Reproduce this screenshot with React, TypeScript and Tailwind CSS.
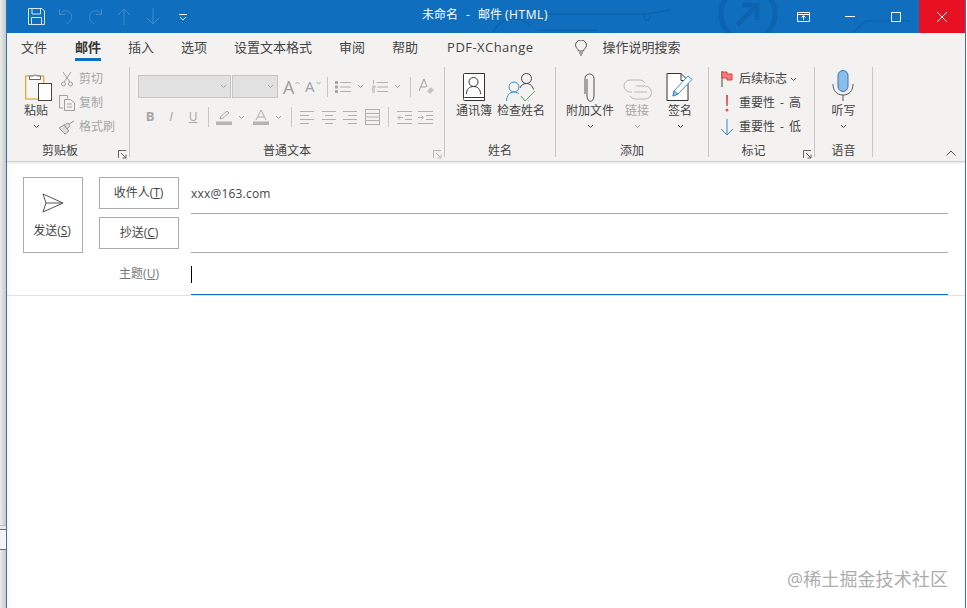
import type { ReactNode } from "react";

const cjk = "font-['Open_Sans','Noto_Sans_CJK_SC',sans-serif]";

const Caret = ({ className = "" }: { className?: string }) => (
  <svg width="7" height="5" viewBox="0 0 7 5" className={`shrink-0 ${className}`}>
    <path d="M1 1l2.5 2.5L6 1" fill="none" stroke="currentColor" strokeWidth="1" />
  </svg>
);

const Launcher = ({ className = "" }: { className?: string }) => (
  <svg width="9" height="9" viewBox="0 0 9 9" className={className}>
    <path d="M.5 8V.5H8M3 3l5 5M8 4.500V8H4.500" fill="none" stroke="currentColor" strokeWidth="1" />
  </svg>
);

const Divider = () => <div className="w-px h-[90px] bg-[#c6c6c6] shrink-0 mt-1" />;
const Sep = ({ className = "" }: { className?: string }) => <div className={`w-px h-[20px] bg-[#c8c8c8] shrink-0 ${className}`} />;

const GroupLabel = ({ children }: { children: ReactNode }) => (
  <div className="absolute bottom-[2px] left-0 right-0 text-center text-xs leading-4 text-[#444]">{children}</div>
);

const Lines = ({ kind }: { kind: "l" | "c" | "r" | "j" | "dec" | "inc" }) => {
  const d = {
    l: "M0 2.500h14M0 6.500h9M0 10.500h14M0 14.500h9",
    c: "M0 2.500h14M3 6.500h8M0 10.500h14M3 14.500h8",
    r: "M0 2.500h14M5 6.500h9M0 10.500h14M5 14.500h9",
    j: "M0 .5h15M0 15.500h15M1 4.500h13M1 8h13M1 11.500h13M.5 1v14M14.500 1v14",
    dec: "M0 2.500h15M8 6.500h7M8 10.500h7M0 14.500h15M6 8.500H1M3 6.500l-2 2 2 2",
    inc: "M0 2.500h15M8 6.500h7M8 10.500h7M0 14.500h15M0 8.500h5M3.500 6.500l2 2-2 2",
  }[kind];
  return (
    <svg width="16" height="16" viewBox="0 0 16 16" className="shrink-0">
      <path d={d} fill="none" stroke="#b0b0b0" strokeWidth="1" />
    </svg>
  );
};

const Paste = () => (
  <svg width="27" height="30" viewBox="0 0 27 30" className="ml-[5px] shrink-0">
    <rect x=".7" y="4" width="18" height="23" fill="#f6f6f6" stroke="#eaa63f" strokeWidth="1.300" />
    <path d="M4.500 7.500V4h4a2 2 0 0 1 3.500 0h3.500v3.500z" fill="#fff" stroke="#666" strokeWidth="1" />
    <rect x="13.500" y="11.500" width="13" height="17" fill="#fff" stroke="#444" strokeWidth="1" />
  </svg>
);

const Book = () => (
  <svg width="22" height="29" viewBox="0 0 22 29">
    <path d="M.5 25V1.500a1 1 0 0 1 1-1h20v27h-20a1.500 1.500 0 0 1-1-2.500a1.500 1.500 0 0 1 1-.5h20" fill="#fff" stroke="#333" strokeWidth="1" />
    <circle cx="10.500" cy="9" r="4.500" fill="none" stroke="#333" />
    <path d="M3.500 21c0-5 3-7.500 7-7.500s7 2.500 7 7.500" fill="none" stroke="#333" />
  </svg>
);

const CheckNames = () => (
  <svg width="31" height="29" viewBox="0 0 31 29">
    <circle cx="20.500" cy="5.500" r="5" fill="none" stroke="#444" />
    <path d="M14 15c1-3 3.500-4.500 6.500-4.500s6 2 7 6" fill="none" stroke="#444" />
    <circle cx="8" cy="14" r="5" fill="none" stroke="#3d8fce" />
    <path d="M.5 28c0-5 3-9 7.500-9 2.500 0 4 1 5 2" fill="none" stroke="#3d8fce" />
    <path d="M15 23l4 5 10-10" fill="none" stroke="#58a55c" />
  </svg>
);

const Clip = () => (
  <svg width="12" height="29" viewBox="0 0 12 29">
    <path d="M3 6v17c0 7 7 7 7 0V5.500C10 -.5 1 -.5 1 5.500V21" fill="none" stroke="#555" strokeWidth="1" />
  </svg>
);

const LinkIcon = () => (
  <svg width="29" height="24" viewBox="0 0 29 24">
    <path d="M9 14H7a6 6 0 0 1 0-12h10a6 6 0 0 1 5 3" fill="none" stroke="#b8b8b8" />
    <path d="M13 8h9a6.500 6.500 0 0 1 0 13H12a6 6 0 0 1-5-3" fill="none" stroke="#b8b8b8" />
    <path d="M11 14h13" stroke="#b8b8b8" />
  </svg>
);

const Signature = () => (
  <svg width="28" height="29" viewBox="0 0 28 29">
    <path d="M1 .5h14l7 7v20H1z" fill="#fff" stroke="#333" />
    <path d="M15 .5v7h7" fill="none" stroke="#333" />
    <path d="M8 18L22 3l4 3.500L12 21l-5 2z" fill="#fff" stroke="#3d8fce" />
    <path d="M7 23l1-5 4 3z" fill="#8fc1e8" stroke="#3d8fce" />
  </svg>
);

const Mic = () => (
  <svg width="22" height="32" viewBox="0 0 22 32">
    <rect x="6" y=".5" width="10" height="21" rx="5" fill="#8cbde8" stroke="#2d78bd" />
    <path d="M1 14c0 7 4 11 10 11s10-4 10-11" fill="none" stroke="#555" />
    <path d="M11 25v6" stroke="#555" />
  </svg>
);

const TextButton = ({ icon, text, disabled, caret }: { icon: ReactNode; text: ReactNode; disabled?: boolean; caret?: boolean }) => (
  <div className={`h-6 flex items-center text-xs ${disabled ? "text-[#a6a6a6]" : "text-[#444]"}`}>
    <div className="w-[20px] flex justify-center shrink-0">{icon}</div>
    <span className="ml-[2px] whitespace-nowrap">{text}</span>
    {caret && <Caret className="ml-[3px] text-[#555]" />}
  </div>
);

const BigButton = ({ icon, text, disabled, caret, className = "" }: { icon: ReactNode; text: string; disabled?: boolean; caret?: boolean; className?: string }) => (
  <div className={`flex flex-col items-center ${className}`}>
    <div className="h-[34px] flex items-end justify-center">{icon}</div>
    <div className={`text-xs leading-4 mt-[1px] whitespace-nowrap ${disabled ? "text-[#a6a6a6]" : "text-[#444]"}`}>{text}</div>
    {caret && <Caret className={`mt-[5px] ${disabled ? "text-[#a6a6a6]" : "text-[#444]"}`} />}
  </div>
);

const FieldButton = ({ children }: { children: ReactNode }) => (
  <div className="w-[80px] h-8 border border-[#ababab] flex items-center justify-center text-xs text-[#444]">{children}</div>
);

const GrowA = ({ size, up }: { size: string; up?: boolean }) => (
  <div className="w-[22px] flex items-center text-[#a0a0a0]">
    <span className={`${size} leading-none`}>A</span>
    <svg width="5" height="4" viewBox="0 0 5 4" className="mb-[7px] ml-[1px]">
      <path d={up ? "M.5 3L2.500 1l2 2" : "M.5 1l2 2 2-2"} fill="none" stroke="#aaa" />
    </svg>
  </div>
);

const QatIcon = ({ d, className = "" }: { d: string; className?: string }) => (
  <svg width="16" height="17" viewBox="0 0 16 17" className={className}>
    <path d={d} fill="none" stroke="#3f8ccb" strokeWidth="1" />
  </svg>
);

const tabs = ["文件", "邮件", "插入", "选项", "设置文本格式", "审阅", "帮助"];

export default function App() {
  return (
    <div className={`w-[967px] h-[608px] overflow-hidden flex bg-[#dcdcdc] ${cjk}`}>
      <div className="w-[6px] shrink-0 flex flex-col bg-linear-to-r from-[#ececec] to-[#c9c9c9]">
        <div className="h-[525px]" />
        <div className="h-[4px] bg-[#e8e8e8] border-t border-[#bbb]" />
        <div className="h-[21px] bg-[#f4f4f4] border-y border-[#3b74b0]" />
      </div>
      <div className="flex-1 flex flex-col border-x border-[#2f77bd] bg-white relative">
        {/* title bar */}
        <div className="h-[33px] bg-[#106ebe] flex items-center relative shrink-0 overflow-hidden">
          <svg width="958" height="33" viewBox="0 0 958 33" className="absolute left-0 top-0">
            <g fill="none" stroke="#0d64ae" strokeWidth="1.500">
              <path d="M540 14h100l24 -4M640 14a3 3 0 1 0 .1 0" />
              <circle cx="741" cy="14" r="27" strokeWidth="5" />
              <path d="M730 25l20-20M735 5h15v15" strokeWidth="5" />
              <path d="M486 33a22 22 0 0 1 36 -8M530 30h60" />
              <path d="M845 33l14-12h44" />
            </g>
          </svg>
          <div className="flex items-center ml-[21px] relative">
            <svg width="17" height="17" viewBox="0 0 17 17">
              <path d="M.5.5h13.500l2.500 2.500v13.500H.5zM4 .5v5.500h8.500V.5M3.500 16.500v-7h10v7" fill="none" stroke="#d6e6f5" strokeWidth="1" />
            </svg>
            <QatIcon className="ml-[13px]" d="M1.500 1v5.500H7M1.500 6.500C3.500 3.500 6.500 2 9.500 3c4 1.500 5 6 3 9.500-1 1.500-2.500 2.500-4 3.500" />
            <QatIcon className="ml-[13px]" d="M14.500 1v5.500H9M14.500 6.500C12.500 3.500 9.500 2 6.500 3c-4 1.500-5 6-3 9.500 1 1.500 2.500 2.500 4 3.500" />
            <QatIcon className="ml-[13px]" d="M8 17V1M2 7l6-6 6 6" />
            <QatIcon className="ml-[13px]" d="M8 0v16M2 10l6 6 6-6" />
            <svg width="8" height="8" viewBox="0 0 8 8" className="ml-[18px]">
              <path d="M0 1.500h8M1 4l3 3 3-3" fill="none" stroke="#e8f0f8" />
            </svg>
          </div>
          <div className="absolute left-[415px] top-[7px] flex text-xs leading-4 text-white whitespace-nowrap">
            <span>未命名</span>
            <span className="mx-[8px]">-</span>
            <span>邮件</span>
            <span className="ml-[3px] tracking-[0.6px]">(HTML)</span>
          </div>
          <div className="ml-auto flex items-center h-full relative">
            <svg width="13" height="10" viewBox="0 0 13 10" className="mr-[35px]">
              <path d="M.5.5h12v9H.5zM.5 2.500h12M6.500 8V4M4.500 5.500l2-2 2 2" fill="none" stroke="#fff" />
            </svg>
            <svg width="10" height="1" viewBox="0 0 10 1" className="mr-[36px]">
              <path d="M0 .5h10" stroke="#fff" />
            </svg>
            <svg width="10" height="10" viewBox="0 0 10 10" className="mr-[18px]">
              <path d="M.5.5h9v9h-9z" fill="none" stroke="#fff" />
            </svg>
            <div className="w-[46px] h-full bg-[#e81123] flex items-center justify-center">
              <svg width="10" height="10" viewBox="0 0 10 10">
                <path d="M0 0l10 10M10 0L0 10" stroke="#fff" />
              </svg>
            </div>
          </div>
        </div>

        {/* tabs */}
        <div className="h-[30px] bg-[#f3f2f1] flex items-center shrink-0 pl-[14px] text-[13px] text-[#444]">
          {tabs.map((t) => (
            <div key={t} className={`h-full relative flex items-center ${t === "文件" ? "mr-[28px]" : "mr-[27px]"} ${t === "邮件" ? "font-bold text-[#333]" : ""}`}>
              {t}
              {t === "邮件" && <div className="absolute left-0 right-0 bottom-[2px] h-[3px] bg-[#106ebe]" />}
            </div>
          ))}
          <span className="ml-[2px] tracking-[0.45px]">PDF-XChange</span>
          <svg width="12" height="16" viewBox="0 0 12 16" className="ml-[42px] shrink-0">
            <path d="M3.500 11c0-2-3-3-3-5.800a5.500 5.200 0 0 1 11 0c0 2.800-3 3.800-3 5.800zM4 13h4M5 15h2" fill="none" stroke="#555" />
          </svg>
          <span className="ml-[15px]">操作说明搜索</span>
        </div>

        {/* ribbon */}
        <div className="h-[99px] bg-[#f3f2f1] border-b border-[#d0d0d0] shadow-[0_1px_2px_rgba(0,0,0,0.12)] flex shrink-0 relative">
          {/* clipboard */}
          <div className="w-[122px] relative flex shrink-0 pl-[17px] pt-[5px]">
            <BigButton icon={<Paste />} text="粘贴" caret className="w-[24px]" />
            <div className="ml-[9px] mt-[-1px] flex flex-col">
              <TextButton disabled text="剪切" icon={<svg width="12" height="16" viewBox="0 0 12 16"><path d="M2 1l7 10M10 1L3 11" stroke="#a0a0a0" fill="none" /><circle cx="2.500" cy="13" r="2" fill="none" stroke="#a0a0a0" /><circle cx="9.500" cy="13" r="2" fill="none" stroke="#a0a0a0" /></svg>} />
              <TextButton disabled text="复制" icon={<svg width="17" height="16" viewBox="0 0 17 16"><path d="M4 13H.5V.5h8v3M5.500 4.500h6l4 3.500v7.500h-10zM8 9h5M8 12h5" fill="none" stroke="#a0a0a0" /></svg>} />
              <TextButton disabled text="格式刷" icon={<svg width="18" height="15" viewBox="0 0 18 15"><path d="M1 8l5-3 5 6-4 3zM6 5l4-2 2 3-3 3zM11 4l5-3" fill="#ddd" stroke="#999" /></svg>} />
            </div>
            <GroupLabel><span className="mr-[16px]">剪贴板</span></GroupLabel>
            <Launcher className="absolute right-[2px] bottom-[2px] text-[#666]" />
          </div>
          <Divider />

          {/* basic text */}
          <div className="w-[314px] relative shrink-0 pl-[8px] pt-[12px] text-[#a6a6a6]">
            <div className="flex items-center h-[23px]">
              <div className="w-[93px] h-[23px] bg-[#e1e1e1] border border-[#c6c6c6] flex items-center justify-end pr-[3px]"><Caret /></div>
              <div className="w-[46px] h-[23px] ml-px bg-[#e1e1e1] border border-[#c6c6c6] flex items-center justify-end pr-[3px]"><Caret /></div>
              <div className="ml-[5px] flex">
                <GrowA size="text-[18px]" up />
                <GrowA size="text-[15px]" />
              </div>
              <Sep />
              <svg width="16" height="14" viewBox="0 0 16 14" className="ml-[7px] shrink-0"><path d="M5 2.500h11M5 7h11M5 11.500h11" stroke="#b0b0b0" /><path d="M0 1h3v3H0zM0 5.500h3v3H0zM0 10h3v3H0z" fill="#a8a8a8" /></svg>
              <Caret className="ml-[6px]" />
              <svg width="16" height="14" viewBox="0 0 16 14" className="ml-[8px] shrink-0"><path d="M5 2.500h11M5 7h11M5 11.500h11M1.500 0v4M0 6h3v2H0v2h3M0 12h3" fill="none" stroke="#b0b0b0" /></svg>
              <Caret className="ml-[6px]" />
              <Sep className="ml-[9px]" />
              <svg width="17" height="17" viewBox="0 0 17 17" className="ml-[7px] shrink-0"><path d="M1 13L6 1l3 8M3 9h5" fill="none" stroke="#a0a0a0" /><path d="M9 13l4-4 3 3-4 4z" fill="#c4c4c4" /></svg>
            </div>
            <div className="flex items-center h-[24px] mt-[7px]">
              <span className="w-[14px] ml-[5px] text-[13px] font-bold text-center">B</span>
              <span className="w-[14px] ml-[7px] text-[13px] italic text-center">I</span>
              <span className="w-[14px] ml-[8px] text-xs underline text-center">U</span>
              <Sep className="ml-[8px]" />
              <svg width="16" height="16" viewBox="0 0 16 16" className="ml-[7px] shrink-0"><path d="M4 10l1-3 6-5 2 2-6 5z" fill="none" stroke="#aaa" /><path d="M0 12.500h16v3.500H0z" fill="#b4b4b4" /></svg>
              <Caret className="ml-[6px]" />
              <svg width="16" height="16" viewBox="0 0 16 16" className="ml-[8px] shrink-0"><path d="M3 11l5-10 5 10M5 8h6" fill="none" stroke="#aaa" /><path d="M0 12.500h16v3.500H0z" fill="#b4b4b4" /></svg>
              <Caret className="ml-[6px]" />
              <Sep className="ml-[9px]" />
              <div className="ml-[8px]"><Lines kind="l" /></div>
              <div className="ml-[6px]"><Lines kind="c" /></div>
              <div className="ml-[5px]"><Lines kind="r" /></div>
              <div className="ml-[6px]"><Lines kind="j" /></div>
              <Sep className="ml-[7px]" />
              <div className="ml-[8px]"><Lines kind="dec" /></div>
              <div className="ml-[5px]"><Lines kind="inc" /></div>
            </div>
            <GroupLabel>普通文本</GroupLabel>
            <Launcher className="absolute right-[2px] bottom-[2px] text-[#b8b8b8]" />
          </div>
          <Divider />

          {/* names */}
          <div className="w-[110px] relative flex shrink-0 pl-[11px] pt-[5px]">
            <BigButton icon={<Book />} text="通讯簿" className="w-[36px]" />
            <BigButton icon={<CheckNames />} text="检查姓名" className="w-[48px] ml-[5px]" />
            <GroupLabel>姓名</GroupLabel>
          </div>
          <Divider />

          {/* attach */}
          <div className="w-[152px] relative flex shrink-0 pl-[9px] pt-[5px]">
            <BigButton icon={<Clip />} text="附加文件" caret className="w-[50px]" />
            <BigButton icon={<LinkIcon />} text="链接" caret disabled className="w-[26px] ml-[9px]" />
            <BigButton icon={<Signature />} text="签名" caret className="w-[26px] ml-[17px]" />
            <GroupLabel>添加</GroupLabel>
          </div>
          <Divider />

          {/* tags */}
          <div className="w-[105px] relative shrink-0 pl-[8px] pt-[4px]">
            <TextButton text="后续标志" caret icon={<svg width="12" height="16" viewBox="0 0 12 16"><path d="M1 0v16" stroke="#444" /><path d="M1 1h5v2h5v6H6V7H1z" fill="#f47c7c" stroke="#d83b3b" /></svg>} />
            <TextButton text={<>重要性<span className="mx-[5px]">-</span>高</>} icon={<svg width="4" height="17" viewBox="0 0 4 17"><path d="M1 0h2l-.2 11H1.200z" fill="#e0555f" /><circle cx="2" cy="15" r="1.500" fill="#e0555f" /></svg>} />
            <TextButton text={<>重要性<span className="mx-[5px]">-</span>低</>} icon={<svg width="14" height="17" viewBox="0 0 14 17"><path d="M7 0v15M1 10l6 6 6-6" fill="none" stroke="#2f86c9" /></svg>} />
            <GroupLabel><span className="mr-[16px]">标记</span></GroupLabel>
            <Launcher className="absolute right-[2px] bottom-[2px] text-[#666]" />
          </div>
          <Divider />

          {/* voice */}
          <div className="w-[57px] relative flex justify-center shrink-0 pt-[5px]">
            <BigButton icon={<Mic />} text="听写" caret />
            <GroupLabel>语音</GroupLabel>
          </div>
          <Divider />
          <svg width="10" height="6" viewBox="0 0 10 6" className="absolute right-[9px] bottom-[5px]">
            <path d="M.5 5.500l4.500-4.500 4.500 4.500" fill="none" stroke="#555" />
          </svg>
        </div>

        {/* compose */}
        <div className="flex flex-col flex-1 relative">
          <div className="h-[134px] flex pl-[16px] pt-[15px] border-b border-[#e1e1e1] shrink-0">
            <div className="w-[60px] h-[76px] border border-[#ababab] flex flex-col items-center pt-[15px] text-xs text-[#444]">
              <svg width="22" height="20" viewBox="0 0 22 20">
                <path d="M1 1l20 9-20 9 3-9zM4 10h17" fill="none" stroke="#555" strokeWidth="1" />
              </svg>
              <span className="mt-[10px] mr-[2px]">发送(<span className="underline">S</span>)</span>
            </div>
            <div className="ml-[16px] flex flex-col w-[80px] gap-[8px] shrink-0">
              <FieldButton><span className="mr-[1px]">收件人(<span className="underline">T</span>)</span></FieldButton>
              <FieldButton><span>抄送(<span className="underline">C</span>)</span></FieldButton>
              <div className="h-8 flex items-center justify-center pt-[1px] text-xs text-[#777]">
                <span>主题(<span className="underline">U</span>)</span>
              </div>
            </div>
            <div className="ml-[12px] mr-[17px] flex-1 flex flex-col mt-[-15px]">
              <div className="h-[52px] border-b border-[#ababab] flex items-center pt-[13px] text-xs tracking-[0.2px] text-[#444]">
                xxx@163.com
              </div>
              <div className="h-[40px] border-b border-[#ababab]" />
              <div className="h-[42px] border-b border-[#106ebe] flex items-center">
                <div className="w-px h-[17px] bg-black mt-[2px]" />
              </div>
            </div>
          </div>
          <div className="absolute right-[17px] bottom-[19px] text-lg leading-5 tracking-[0.1px] text-[#adadad]">@稀土掘金技术社区</div>
        </div>
      </div>
      <div className="w-[1px] bg-white shrink-0" />
    </div>
  );
}
